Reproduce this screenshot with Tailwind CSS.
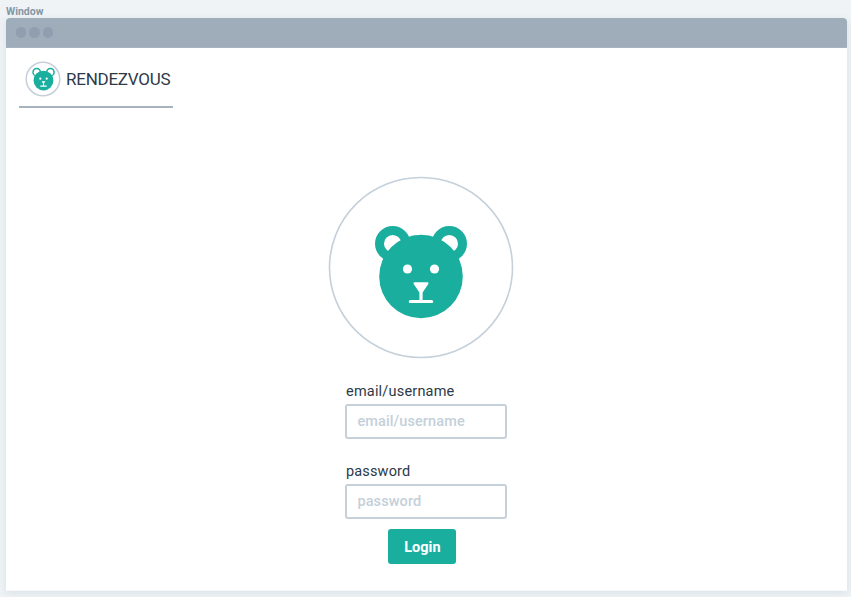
<!DOCTYPE html>
<html lang="en">
<head>
<meta charset="utf-8">
<title>Rendezvous</title>
<script src="https://cdn.jsdelivr.net/npm/@tailwindcss/browser@4"></script>
</head>
<body class="h-[597px] overflow-hidden bg-[#eff3f6] pl-[6px] font-[Roboto,sans-serif] text-[#2c3a47]">
<div class="h-[18px] pt-[5px] text-[10.5px] leading-[13px] font-bold text-[#8496a4]"><span>Window</span></div>
<main class="h-[573px] w-[841px] rounded-t-[4px] border-b border-[#f6f8f9] bg-white shadow-[0_2px_8px_rgba(60,90,110,0.12)]">
  <div class="flex h-[30px] items-center gap-[3px] rounded-t-[4px] border-b border-[#a9b2c3] bg-[#9eadb9] pl-[10px]">
    <i class="size-[10.4px] rounded-full bg-[#8f9faf]"></i>
    <i class="size-[10.4px] rounded-full bg-[#8f9faf]"></i>
    <i class="size-[10.4px] rounded-full bg-[#8f9faf]"></i>
  </div>
  <header class="ml-[13px] flex h-[60px] w-[154px] items-center border-b-2 border-[#a7b2be] pl-[6px]">
    <div class="mt-[4px] flex size-[36px] shrink-0 items-center justify-center">
      <svg class="size-[36px]" viewBox="25 61 36 36">
        <circle cx="43" cy="79" r="16.8" fill="none" stroke="#c5d0da" stroke-width="1.5"/>
        <g fill="#fff" stroke="#1aae9f" stroke-width="1.5"><circle cx="36.7" cy="72.2" r="3.7"/><circle cx="50.4" cy="72.2" r="3.7"/></g>
        <circle cx="43.5" cy="80.6" r="9.9" fill="#1aae9f"/>
        <g fill="#fff"><circle cx="40.3" cy="78.7" r="1.1"/><circle cx="46.7" cy="78.7" r="1.1"/>
        <path d="M41.6 81.2H45.4L44 83.6V85.6H46.7V86.7H40.3V85.6H43V83.6Z"/></g>
      </svg>
    </div>
    <h1 class="mt-[4px] ml-[5px] text-[17px] leading-[22px] font-normal tracking-[-0.25px] whitespace-nowrap">RENDEZVOUS</h1>
  </header>
  <div class="mt-[68px] ml-[322px] flex h-[183px] w-[186px] items-center justify-center">
    <svg class="h-[183px] w-[186px]" viewBox="328 176 186 183">
      <ellipse cx="421" cy="267.5" rx="91.5" ry="90" fill="none" stroke="#c5d0da" stroke-width="1.6"/>
      <g fill="#fff" stroke="#1aae9f" stroke-width="9"><circle cx="392.7" cy="243.7" r="13.2"/><circle cx="449.3" cy="243.7" r="13.2"/></g>
      <circle cx="421" cy="276.5" r="41.8" fill="#1aae9f"/>
      <g fill="#fff"><circle cx="407.5" cy="269" r="4.6"/><circle cx="434.5" cy="269" r="4.6"/>
      <path d="M414.6 282.2H427.4Q429.2 282.4 428.3 284L422.6 292.6V300H431.7a1.5 1.5 0 0 1 0 3.1H410.3a1.5 1.5 0 0 1 0-3.1H419.4V292.6L413.7 284Q412.8 282.4 414.6 282.2Z"/></g>
    </svg>
  </div>
  <form class="mt-[23px] ml-[340px] flex w-[162px] flex-col">
    <label for="user" class="h-[22px] text-[14.5px] leading-[20px] tracking-[0.2px]">email/username</label>
    <input id="user" placeholder="email/username" class="-ml-[0.6px] h-[35px] w-[162px] rounded-[3px] border-2 border-[#c6d0d9] bg-white px-[10px] text-[14.5px] font-medium tracking-[0.1px] placeholder:text-[#c4d0da]">
    <label for="pass" class="mt-[23px] h-[22px] text-[14.5px] leading-[20px] tracking-[0.15px]">password</label>
    <input id="pass" type="password" placeholder="password" class="-ml-[0.6px] h-[35px] w-[162px] rounded-[3px] border-2 border-[#c6d0d9] bg-white px-[10px] text-[14.5px] font-medium tracking-[0.1px] placeholder:text-[#c4d0da]">
    <button type="button" class="mt-[10px] ml-[42.4px] h-[35px] w-[68px] rounded-[3px] bg-[#1aae9f] pt-[2px] text-[14.5px] font-bold text-white">Login</button>
  </form>
</main>
</body>
</html>
